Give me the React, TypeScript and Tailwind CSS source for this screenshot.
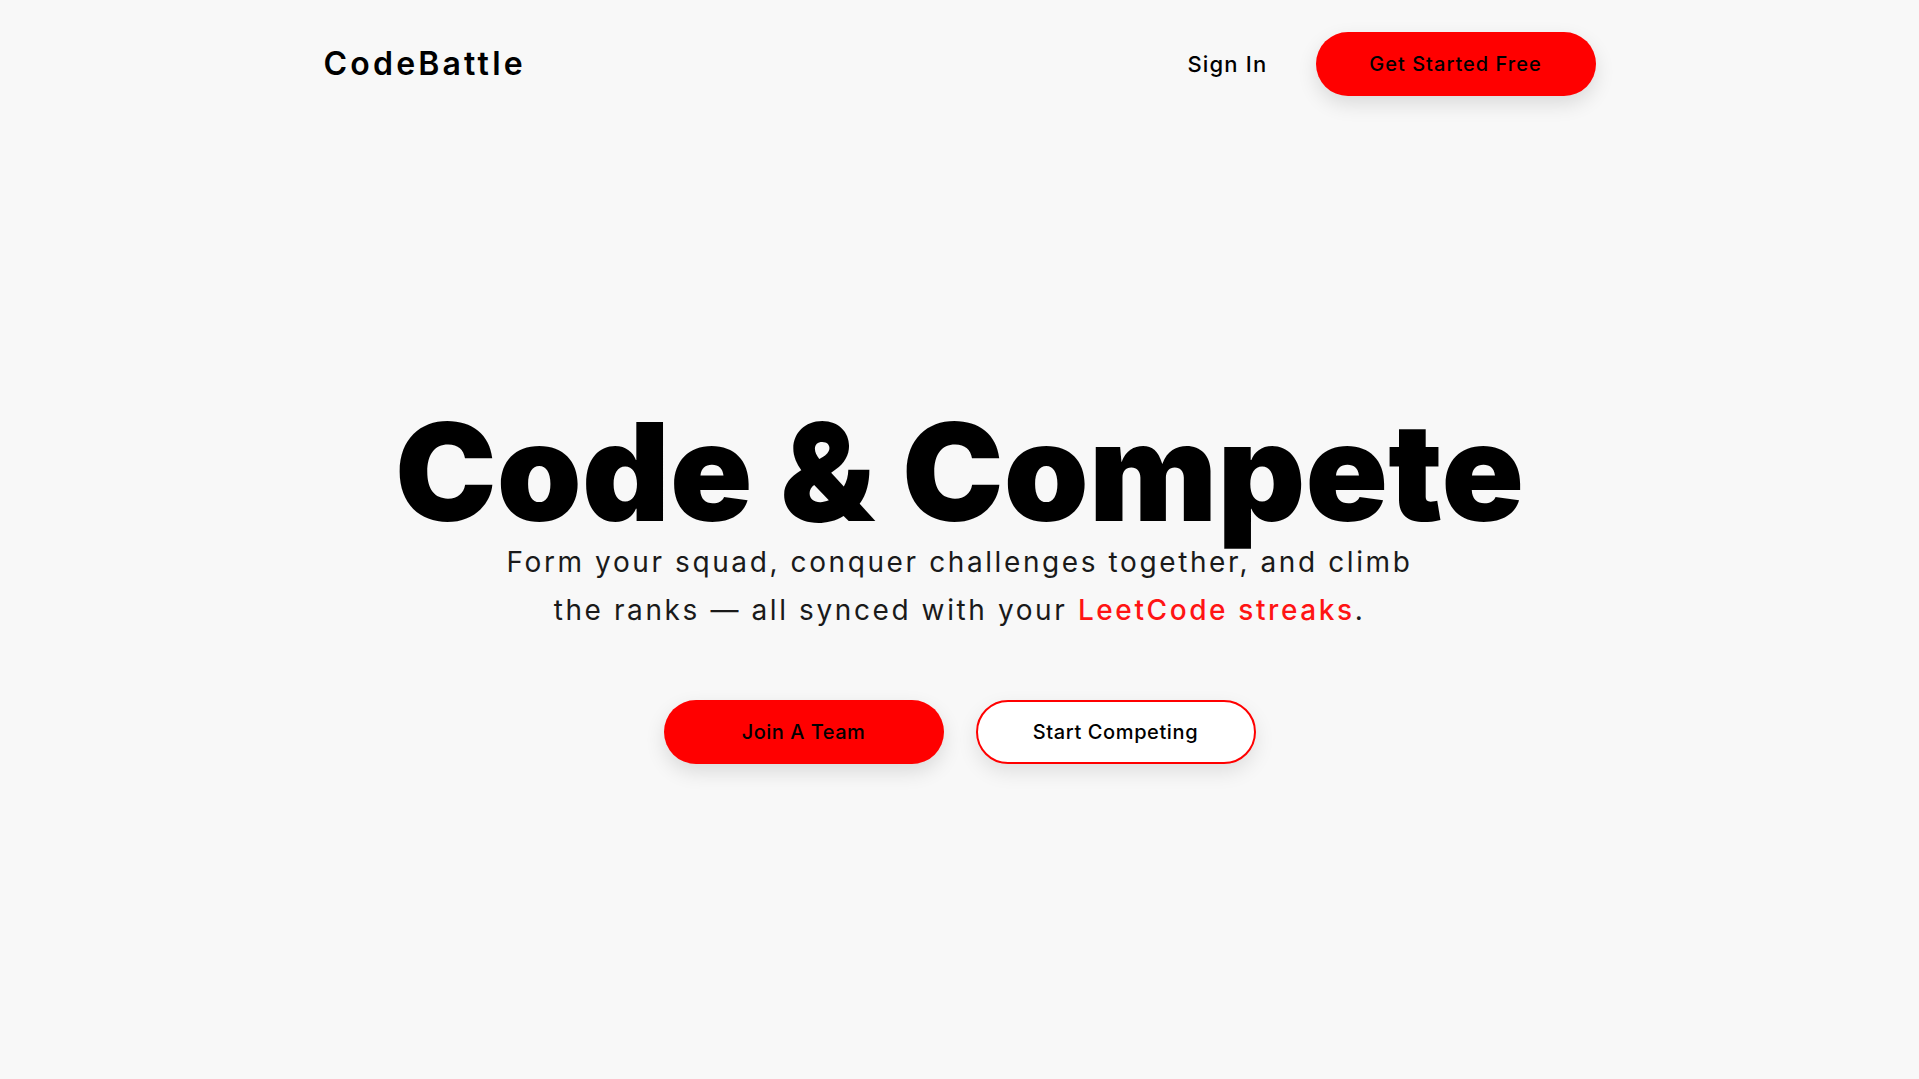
import React from "react";

export default function App() {
  return (
    <div
      className="min-h-screen w-full bg-[#f8f8f8] text-black"
      style={{ fontFamily: "Inter, 'Noto Sans', sans-serif" }}
    >
      <header className="mx-auto flex max-w-[1272px] items-center justify-between pt-8">
        <div className="text-[32px] font-semibold tracking-[3.2px] text-black">CodeBattle</div>
        <nav className="flex items-center gap-12">
          <a className="text-[22px] font-medium tracking-[1.2px] text-black">Sign In</a>
          <button className="h-16 w-[280px] rounded-full bg-[#ff0000] text-[20px] font-medium tracking-[1px] text-black shadow-[0_8px_20px_rgba(0,0,0,0.12)]">
            Get Started Free
          </button>
        </nav>
      </header>

      <main className="flex flex-col items-center pt-[308px]">
        <h1 className="text-[136px] font-black leading-none tracking-[0.2px] text-black">
          Code &amp; Compete
        </h1>
        <p className="-mt-[2px] text-center text-[28px] leading-[48px] tracking-[2.6px] text-[#1a1a1a]">
          Form your squad, conquer challenges together, and climb
          <br />
          the ranks — all synced with your{" "}
          <span className="font-medium text-[#ff1414]">LeetCode streaks</span>.
        </p>
        <div className="mt-[66px] flex items-center gap-8">
          <button className="h-16 w-[280px] rounded-full bg-[#ff0000] text-[20px] font-medium tracking-[0.5px] text-black shadow-[0_8px_20px_rgba(0,0,0,0.12)]">
            Join A Team
          </button>
          <button className="h-16 w-[280px] rounded-full border-2 border-[#ff0000] bg-white text-[20px] font-medium tracking-[0.6px] text-black shadow-[0_8px_20px_rgba(0,0,0,0.10)]">
            Start Competing
          </button>
        </div>
      </main>
    </div>
  );
}
